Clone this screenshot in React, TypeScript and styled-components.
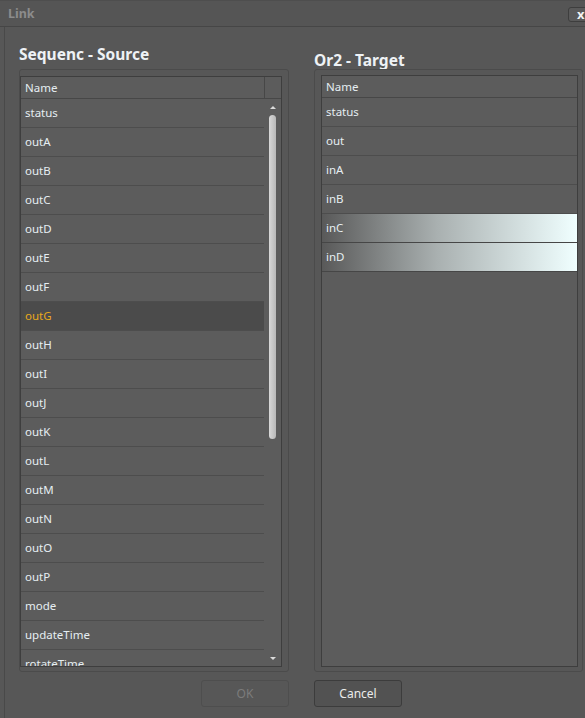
import React from "react";
import styled, { createGlobalStyle, css } from "styled-components";

const GlobalStyle = createGlobalStyle`
  html, body {
    margin: 0;
    padding: 0;
    background: #575757;
  }
  * {
    box-sizing: border-box;
  }
`;

const Window = styled.div`
  width: 585px;
  height: 718px;
  overflow: hidden;
  display: flex;
  flex-direction: column;
  background: #575757;
  font-family: "Noto Sans", "Open Sans", sans-serif;
  font-size: 11.5px;
  color: #e6eef2;
`;

const TitleBar = styled.div`
  height: 27px;
  flex-shrink: 0;
  display: flex;
  align-items: center;
  justify-content: space-between;
  padding-left: 8px;
  background: #555555;
  border-top: 1px solid #4e4e4e;
  border-bottom: 1px solid #464646;
`;

const TitleText = styled.span`
  font-weight: bold;
  font-size: 12.5px;
  color: #8c8c8c;
`;

const CloseButton = styled.div`
  width: 26px;
  height: 15px;
  margin-right: -9px;
  margin-top: 1px;
  border: 1px solid #3e3e3e;
  border-radius: 3px;
  background: #5a5a5a;
  color: #f2f2f2;
  font-weight: bold;
  font-size: 13px;
  line-height: 12px;
  padding-left: 8px;
`;

const Body = styled.div`
  flex: 1;
  margin-left: 4px;
  border-left: 1px solid #494949;
  padding-left: 14px;
  display: grid;
  grid-template-columns: 270px 269px;
  grid-template-rows: 42px 603px 1fr;
  column-gap: 25px;
`;

const Heading = styled.h2<{ $drop: number }>`
  margin: 0;
  align-self: end;
  padding-bottom: ${(p) => p.$drop}px;
  font-size: 15.5px;
  line-height: 18px;
  font-weight: bold;
  color: #eef2f5;
`;

const Frame = styled.div<{ $pad: string }>`
  border: 1px solid #4b4b4b;
  border-radius: 3px;
  padding: ${(p) => p.$pad};
  display: flex;
  min-height: 0;
`;

const Table = styled.div`
  flex: 1;
  display: flex;
  flex-direction: column;
  border: 1px solid #3e3e3e;
  background: #5c5c5c;
  overflow: hidden;
`;

const HeaderRow = styled.div`
  height: 22px;
  flex-shrink: 0;
  display: flex;
  border-bottom: 1px solid #474747;
`;

const HeaderCell = styled.div`
  flex: 1;
  padding-left: 4px;
  line-height: 21px;
`;

const HeaderSpacer = styled.div`
  width: 17px;
  border-left: 1px solid #474747;
`;

const ListArea = styled.div`
  flex: 1;
  display: flex;
  min-height: 0;
  overflow: hidden;
`;

const Rows = styled.div`
  flex: 1;
  display: flex;
  flex-direction: column;
`;

const Row = styled.div<{ $selected?: boolean; $linked?: boolean }>`
  height: 29px;
  flex-shrink: 0;
  padding-left: 4px;
  line-height: 28px;
  border-bottom: 1px solid #4d4d4d;
  ${(p) =>
    p.$selected &&
    css`
      background: #4b4b4b;
      color: #e6a81c;
    `}
  ${(p) =>
    p.$linked &&
    css`
      background: linear-gradient(to right, #595959 0%, #a9b0b0 45%, #f0ffff 100%);
      border-bottom-color: #464646;
    `}
`;

const ScrollTrack = styled.div`
  width: 17px;
  flex-shrink: 0;
  display: flex;
  flex-direction: column;
  align-items: center;
  padding: 7px 0 6px;
`;

const Arrow = styled.div<{ $down?: boolean }>`
  width: 0;
  height: 0;
  border-left: 3px solid transparent;
  border-right: 3px solid transparent;
  ${(p) =>
    p.$down
      ? css`border-top: 3px solid #dcdcdc;`
      : css`border-bottom: 3px solid #dcdcdc;`}
`;

const Thumb = styled.div`
  width: 7px;
  height: 324px;
  margin-top: 6px;
  border-radius: 4px;
  background: linear-gradient(to right, #d8d8d8, #b8b8b8);
`;

const TrackFill = styled.div`
  flex: 1;
`;

const ButtonCell = styled.div<{ $side: "start" | "end" }>`
  display: flex;
  justify-content: ${(p) => (p.$side === "end" ? "flex-end" : "flex-start")};
  align-items: flex-start;
  padding-top: 8px;
`;

const Button = styled.button<{ $disabled?: boolean }>`
  width: 88px;
  height: 27px;
  border-radius: 3px;
  font-family: "Noto Sans", "Open Sans", sans-serif;
  font-size: 12px;
  padding: 0;
  ${(p) =>
    p.$disabled
      ? css`
          background: #575757;
          border: 1px solid #4e4e4e;
          color: #7c7c7c;
        `
      : css`
          background: #525252;
          border: 1px solid #3c3c3c;
          color: #ebebeb;
        `}
`;

const sourceItems = [
  "status",
  "outA",
  "outB",
  "outC",
  "outD",
  "outE",
  "outF",
  "outG",
  "outH",
  "outI",
  "outJ",
  "outK",
  "outL",
  "outM",
  "outN",
  "outO",
  "outP",
  "mode",
  "updateTime",
  "rotateTime",
];

const targetItems = ["status", "out", "inA", "inB", "inC", "inD"];
const linked = ["inC", "inD"];

export default function App() {
  return (
    <>
      <GlobalStyle />
      <Window>
        <TitleBar>
          <TitleText>Link</TitleText>
          <CloseButton>x</CloseButton>
        </TitleBar>
        <Body>
          <Heading $drop={6}>Sequenc - Source</Heading>
          <Heading $drop={0}>Or2 - Target</Heading>

          <Frame $pad="6px 6px 4px 0">
            <Table>
              <HeaderRow>
                <HeaderCell>Name</HeaderCell>
                <HeaderSpacer />
              </HeaderRow>
              <ListArea>
                <Rows>
                  {sourceItems.map((name) => (
                    <Row key={name} $selected={name === "outG"}>
                      {name}
                    </Row>
                  ))}
                </Rows>
                <ScrollTrack>
                  <Arrow />
                  <Thumb />
                  <TrackFill />
                  <Arrow $down />
                </ScrollTrack>
              </ListArea>
            </Table>
          </Frame>

          <Frame $pad="5px 4px 4px 6px">
            <Table>
              <HeaderRow>
                <HeaderCell>Name</HeaderCell>
              </HeaderRow>
              <ListArea>
                <Rows>
                  {targetItems.map((name) => (
                    <Row key={name} $linked={linked.includes(name)}>
                      {name}
                    </Row>
                  ))}
                </Rows>
              </ListArea>
            </Table>
          </Frame>

          <ButtonCell $side="end">
            <Button $disabled>OK</Button>
          </ButtonCell>
          <ButtonCell $side="start">
            <Button>Cancel</Button>
          </ButtonCell>
        </Body>
      </Window>
    </>
  );
}
